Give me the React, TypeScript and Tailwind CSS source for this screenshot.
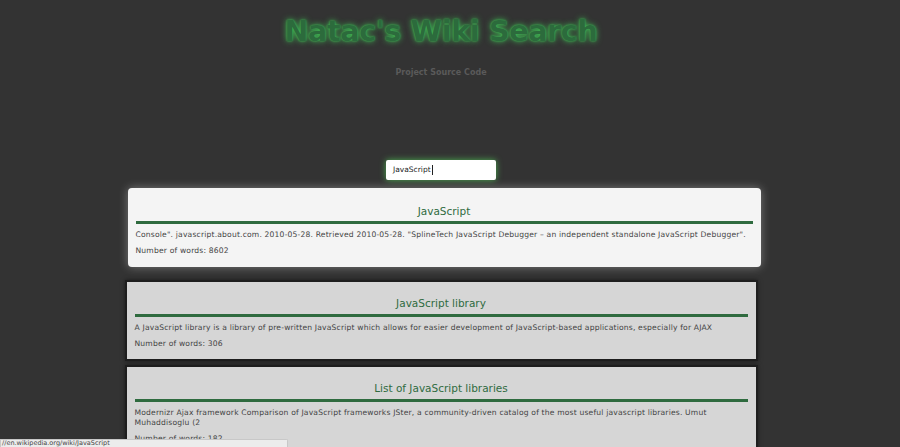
const results = [
  {
    title: "JavaScript",
    snippet:
      'Console". javascript.about.com. 2010-05-28. Retrieved 2010-05-28.  "SplineTech JavaScript Debugger \u2013 an independent standalone JavaScript Debugger".',
    words: 8602,
    active: true,
  },
  {
    title: "JavaScript library",
    snippet:
      "A JavaScript library is a library of pre-written JavaScript which allows for easier development of JavaScript-based applications, especially for AJAX",
    words: 306,
  },
  {
    title: "List of JavaScript libraries",
    snippet:
      "Modernizr Ajax framework Comparison of JavaScript frameworks JSter, a community-driven catalog of the most useful javascript libraries. Umut Muhaddisoglu (2",
    words: 182,
  },
];

function ResultCard({ title, snippet, words, active }: { title: string; snippet: string; words: number; active?: boolean }) {
  return (
    <a
      href="#"
      className={
        active
          ? "block translate-x-[3px] rounded-[4px] bg-[#f4f4f4] px-2 pb-[11px] pt-[9px] shadow-[0_0_10px_rgba(255,255,255,0.35)]"
          : "block border-2 border-[#1e1e1e] bg-[#d6d6d6] px-2 pb-[10px] pt-[7px] shadow-[0_0_4px_rgba(0,0,0,0.5)]"
      }
    >
      <h2
        className={
          active
            ? "mt-[8px] border-b-[3px] border-[#2f6b3f] pb-[4px] text-center text-[10.5px] leading-[12px] text-[#2f6b3f]"
            : "mt-[8px] border-b-[3px] border-[#2f6b3f] pb-[5px] text-center text-[10.5px] leading-[12px] text-[#2f6b3f]"
        }
      >
        {title}
      </h2>
      <p className="mt-[6px] text-[7.6px] leading-[10px] tracking-[0.18px] text-[#444]">{snippet}</p>
      <p className="mt-[6px] text-[7.6px] leading-[10px] tracking-[0.18px] text-[#444]">Number of words: {words}</p>
    </a>
  );
}

export default function App() {
  return (
    <div className="relative min-h-[447px] overflow-hidden bg-[#333333] font-['DejaVu_Sans',sans-serif]">
      <div className="w-[882px]">
        <h1 className="pt-[14px] text-center text-[28.5px] font-bold leading-[36px] tracking-[-0.3px] text-[#2c6b3c] [text-shadow:0_0_6px_#3fbf55,0_0_2px_#3fbf55]">
          Natac's Wiki Search
        </h1>
        <p className="mt-[18px] text-center text-[8px] font-bold leading-[10px] text-[#5a5a5a]">Project Source Code</p>
        <div className="mt-[82px] flex justify-center">
          <div className="flex h-[20px] w-[110px] items-center rounded-[2px] bg-white px-[7px] text-[7.5px] text-[#222] shadow-[0_0_6px_#4caf50]">
            JavaScript<span className="ml-px h-[10px] w-px bg-[#222]" />
          </div>
        </div>
        <div className="mx-auto mt-[8px] flex w-[633px] flex-col">
          <ResultCard {...results[0]} />
          <div className="mt-[13px]">
            <ResultCard {...results[1]} />
          </div>
          <div className="mt-[4px]">
            <ResultCard {...results[2]} />
          </div>
        </div>
      </div>
      <div className="fixed bottom-0 left-0 h-[8px] w-[288px] overflow-hidden rounded-tr-[2px] border-x border-t border-[#c8c8c8] bg-[#ececec] pl-[1px] text-[6.5px] leading-[7px] text-[#444]">
        //en.wikipedia.org/wiki/JavaScript
      </div>
    </div>
  );
}
